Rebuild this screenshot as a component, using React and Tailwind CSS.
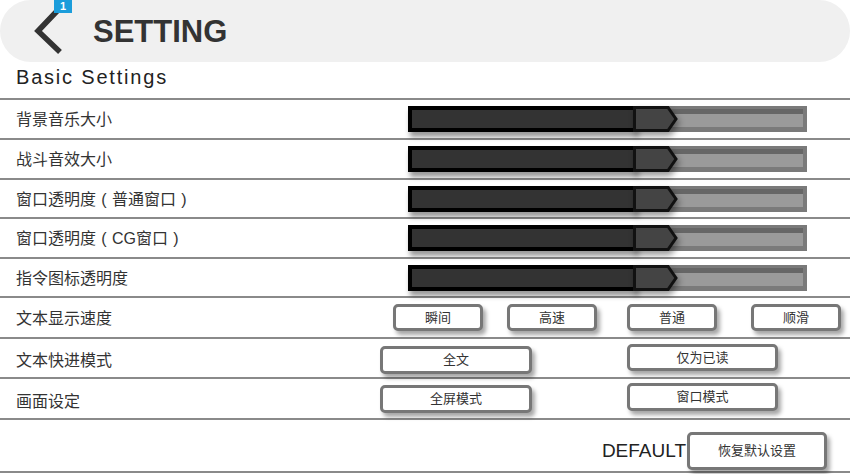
import React from "react";

const F = "font-['Liberation_Sans','Noto_Sans_CJK_SC',Arial,sans-serif]";

function Slider() {
  return (
    <div className="relative flex w-[399px] h-[26px]">
      <div className="relative z-10 w-[229px] h-full border-4 border-black bg-[#333] shadow-[2px_5px_5px_rgba(0,0,0,0.4)]" />
      <div className="flex-1 bg-[#7a7a7a] pt-[3px] pb-[5px] pr-[4px]">
        <div className="h-full bg-[#9a9a9a] border-t-[5px] border-[#666]" />
      </div>
      <svg
        className="absolute left-[225px] top-0 z-20 drop-shadow-[2px_4px_3px_rgba(0,0,0,0.4)]"
        width="46"
        height="26"
        viewBox="0 0 46 26"
      >
        <polygon points="1.5,1.5 35,1.5 43,13 35,24.5 1.5,24.5" fill="#444" stroke="#111" strokeWidth="3" strokeLinejoin="miter" />
      </svg>
    </div>
  );
}

function Btn({ children, className = "" }) {
  return (
    <div
      className={`flex items-center justify-center bg-white border-[3px] border-[#777] rounded-[5px] shadow-[3px_4px_4px_rgba(0,0,0,0.35)] text-[13px] text-[#333] ${className}`}
    >
      {children}
    </div>
  );
}

function Row({ h, children, items = "items-center" }) {
  return (
    <div className={`flex ${items} border-b-2 border-[#8a8a8a]`} style={{ height: h }}>
      {children}
    </div>
  );
}

function Label({ children, w, className = "mt-[2px]" }) {
  return (
    <div className={`shrink-0 pl-4 text-[16px] leading-[22px] text-[#333] ${className}`} style={{ width: w }}>
      {children}
    </div>
  );
}

const P = ({ c }) => <span className="inline-block w-[16px] text-center">{c}</span>;

export default function App() {
  const sliderRows = [
    ["背景音乐大小", 40],
    ["战斗音效大小", 40],
    [<>窗口透明度<P c="(" />普通窗口<P c=")" /></>, 39],
    [<>窗口透明度<P c="(" />CG窗口<P c=")" /></>, 40],
    ["指令图标透明度", 39],
  ];
  return (
    <div className={`w-[850px] h-[474px] overflow-hidden bg-white ${F}`}>
      <div className="h-[62px] bg-[#f0f0f0] rounded-full flex items-center pl-[33px]">
        <div className="relative w-[32px] h-[46px]">
          <svg width="32" height="46" viewBox="0 0 32 46">
            <polyline points="25,2 5,23 27,44" fill="none" stroke="#333" strokeWidth="5.5" strokeLinejoin="miter" />
          </svg>
          <div className="absolute left-[21px] top-[-8px] w-[18px] h-[13px] bg-[#1b9ddb] text-white text-[11px] font-bold leading-[13px] text-center">
            1
          </div>
        </div>
        <div className="ml-[28px] text-[31px] font-bold leading-none text-[#333]">SETTING</div>
      </div>
      <div className="h-[38px] border-b-2 border-[#8a8a8a] pl-4 pt-[4px]">
        <div className="text-[20px] leading-[23px] tracking-[1.8px] text-[#222]">Basic Settings</div>
      </div>
      {sliderRows.map(([l, h], i) => (
        <Row key={i} h={h}>
          <Label w={408}>{l}</Label>
          <Slider />
        </Row>
      ))}
      <Row h={41}>
        <Label w={393}>文本显示速度</Label>
        <Btn className="w-[90px] h-[27px]">瞬间</Btn>
        <Btn className="w-[90px] h-[27px] ml-[24px]">高速</Btn>
        <Btn className="w-[90px] h-[27px] ml-[30px]">普通</Btn>
        <Btn className="w-[90px] h-[27px] ml-[34px]">顺滑</Btn>
      </Row>
      <Row h={40} items="items-start">
        <Label w={380} className="mt-[11px]">文本快进模式</Label>
        <Btn className="w-[152px] h-[28px] mt-[7px]">全文</Btn>
        <Btn className="w-[151px] h-[27px] mt-[5px] ml-[95px]">仅为已读</Btn>
      </Row>
      <Row h={41} items="items-start">
        <Label w={380} className="mt-[12px]">画面设定</Label>
        <Btn className="w-[152px] h-[28px] mt-[6px]">全屏模式</Btn>
        <Btn className="w-[151px] h-[28px] mt-[4px] ml-[95px]">窗口模式</Btn>
      </Row>
      <div className="h-[53px] border-b-2 border-[#8a8a8a] flex justify-end items-end pr-[23px] pb-[1px]">
        <div className="flex items-center">
          <div className="text-[19px] leading-[22px] text-[#222] mr-[1px]">DEFAULT</div>
          <Btn className="w-[140px] h-[38px]">恢复默认设置</Btn>
        </div>
      </div>
    </div>
  );
}
